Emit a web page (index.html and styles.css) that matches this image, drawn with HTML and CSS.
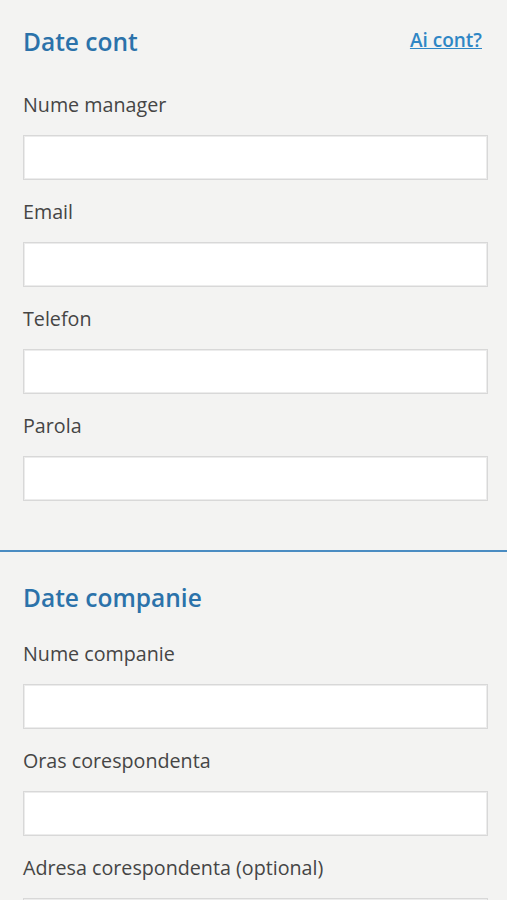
FILE: index.html
```html
<!DOCTYPE html>
<html lang="ro">
<head>
<meta charset="utf-8">
<title>Inregistrare</title>
<link rel="stylesheet" href="styles.css">
</head>
<body>
<section class="section section-account">
  <div class="section-head">
    <h2 class="section-title">Date cont</h2>
    <a class="login-link" href="#">Ai cont?</a>
  </div>
  <div class="field">
    <label class="field-label">Nume manager</label>
    <input class="field-input" type="text">
  </div>
  <div class="field">
    <label class="field-label">Email</label>
    <input class="field-input" type="email">
  </div>
  <div class="field">
    <label class="field-label">Telefon</label>
    <input class="field-input" type="tel">
  </div>
  <div class="field">
    <label class="field-label">Parola</label>
    <input class="field-input" type="password">
  </div>
</section>
<section class="section section-company">
  <div class="section-head">
    <h2 class="section-title">Date companie</h2>
  </div>
  <div class="field">
    <label class="field-label">Nume companie</label>
    <input class="field-input" type="text">
  </div>
  <div class="field">
    <label class="field-label">Oras corespondenta</label>
    <input class="field-input" type="text">
  </div>
  <div class="field">
    <label class="field-label">Adresa corespondenta (optional)</label>
    <input class="field-input" type="text">
  </div>
</section>
</body>
</html>
```

FILE: styles.css
```css
html, body {
  margin: 0;
  padding: 0;
}
body {
  background: #f3f3f2;
  font-family: "Open Sans", "Noto Sans", sans-serif;
  color: #444;
}
.section {
  padding: 0 19px 0 23px;
}
.section-account {
  padding-top: 26px;
  padding-bottom: 30px;
  border-bottom: 2px solid #4a8cc2;
}
.section-company {
  padding-top: 30px;
}
.section-head {
  display: flex;
  justify-content: space-between;
  align-items: flex-start;
  margin-bottom: 34px;
}
.section-company .section-head {
  margin-bottom: 27px;
}
.section-title {
  margin: 0;
  font-size: 24.5px;
  line-height: 32px;
  font-weight: 600;
  color: #2b72aa;
}
.login-link {
  margin-top: 2px;
  margin-right: 6px;
  font-size: 19px;
  line-height: 24px;
  font-weight: 600;
  color: #2e86c5;
  text-decoration: underline;
}
.field {
  display: flex;
  flex-direction: column;
  margin-bottom: 19px;
}
.field-label {
  font-size: 19.7px;
  line-height: 25px;
  color: #454545;
  margin-bottom: 18px;
}
.field-input {
  box-sizing: border-box;
  height: 45px;
  width: 100%;
  margin: 0;
  background: #fff;
  border: 1px solid #d8d8d8;
  box-shadow: inset 0 0 0 1px #ececec;
  border-radius: 0;
  font: inherit;
  padding: 0 10px;
}
```
